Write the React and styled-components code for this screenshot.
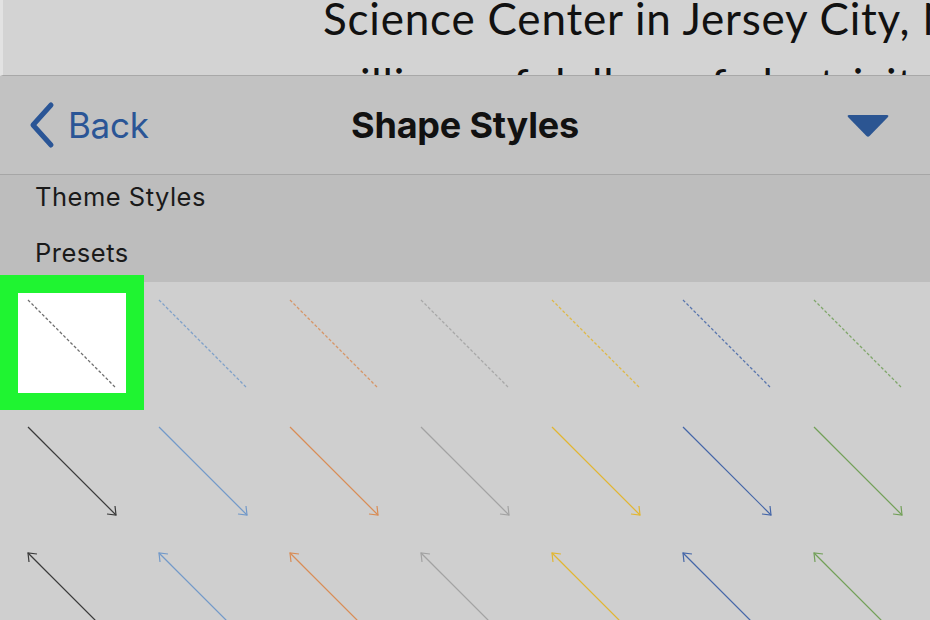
import React from 'react';
import styled, { createGlobalStyle } from 'styled-components';

const GlobalStyle = createGlobalStyle`
  html, body {
    margin: 0;
    padding: 0;
    background: #cfcfcf;
  }
  * {
    box-sizing: border-box;
  }
`;

const COLORS = ['#3a3a3a', '#7299c9', '#d98c55', '#a2a2a2', '#e2b631', '#4466a8', '#72a058'];

const CELL_W = 131;
const CELL_H = 126.5;

export default function App() {
  return (
    <>
      <GlobalStyle />
      <Page>
        <DocArea>
          <DocText>
            <DocLine>Science Center in Jersey City, New Jersey, which saves</DocLine>
            <DocLine>millions of dollars of electricity a year for the</DocLine>
          </DocText>
        </DocArea>

        <NavBar>
          <BackButton>
            <svg width="28" height="48" viewBox="0 0 28 48">
              <path d="M23 4 L5 24 L23 44" fill="none" stroke="#2a5596" strokeWidth="5" strokeLinecap="round" strokeLinejoin="round" />
            </svg>
            <BackLabel>Back</BackLabel>
          </BackButton>
          <Title>Shape Styles</Title>
          <Menu>
            <svg width="44" height="26" viewBox="0 0 44 26">
              <path d="M3 2 L41 2 Q43 2 42 4 L23.5 23 Q22 24.5 20.5 23 L2 4 Q1 2 3 2 Z" fill="#2b5592" />
            </svg>
          </Menu>
        </NavBar>

        <Options>
          <OptionRow>Theme Styles</OptionRow>
          <OptionRow>Presets</OptionRow>
        </Options>

        <Grid>
          {[0, 1, 2].map((row) =>
            COLORS.map((color, col) => (
              <Cell key={`${row}-${col}`}>
                {row === 0 && col === 0 && <Selected />}
                <LineIcon
                  kind={row}
                  color={row === 0 && col === 0 ? '#555' : color}
                />
              </Cell>
            ))
          )}
        </Grid>
      </Page>
    </>
  );
}

function LineIcon({ kind, color }) {
  const x1 = 28, y1 = 18, x2 = 116, y2 = 106;
  const head = 9;
  return (
    <Svg width={CELL_W} height={CELL_H + 20} viewBox={`0 0 ${CELL_W} ${CELL_H + 20}`}>
      {kind === 0 && (
        <line x1={x1} y1={y1} x2={x2} y2={y2} stroke={color} strokeWidth="1.3" strokeDasharray="3 2" opacity="0.85" />
      )}
      {kind === 1 && (
        <>
          <line x1={x1} y1={y1} x2={x2} y2={y2} stroke={color} strokeWidth="1.2" />
          <path d={`M${x2 - head} ${y2 - 1} L${x2} ${y2} L${x2 - 1} ${y2 - head}`} fill="none" stroke={color} strokeWidth="1.2" />
        </>
      )}
      {kind === 2 && (
        <>
          <line x1={x1} y1={y1} x2={x2} y2={y2} stroke={color} strokeWidth="1.2" />
          <path d={`M${x1 + head} ${y1 + 1} L${x1} ${y1} L${x1 + 1} ${y1 + head}`} fill="none" stroke={color} strokeWidth="1.2" />
        </>
      )}
    </Svg>
  );
}

const Page = styled.div`
  width: 930px;
  height: 620px;
  overflow: hidden;
  display: flex;
  flex-direction: column;
  background: #cfcfcf;
`;

const DocArea = styled.div`
  height: 76px;
  flex-shrink: 0;
  overflow: hidden;
  background: #d3d3d3;
  border-left: 3px solid #e2e2e2;
  border-bottom: 1px solid #a8a8a8;
  padding-left: 320px;
`;

const DocText = styled.div`
  margin-top: -15px;
`;

const DocLine = styled.div`
  font-family: Lato, "Liberation Sans", sans-serif;
  font-size: 44px;
  line-height: 66px;
  letter-spacing: 0.8px;
  color: #111;
  white-space: nowrap;
`;

const NavBar = styled.div`
  height: 99px;
  flex-shrink: 0;
  display: grid;
  grid-template-columns: 1fr auto 1fr;
  align-items: center;
  background: #c2c2c2;
  border-bottom: 1px solid #a6a6a6;
  font-family: Inter, "Liberation Sans", sans-serif;
`;

const BackButton = styled.div`
  display: flex;
  align-items: center;
  gap: 12px;
  padding-left: 28px;
  color: #2a5596;
`;

const BackLabel = styled.span`
  font-size: 35px;
  letter-spacing: -0.3px;
`;

const Title = styled.div`
  font-size: 36px;
  font-weight: 700;
  color: #111;
  letter-spacing: -0.2px;
`;

const Menu = styled.div`
  display: flex;
  justify-content: flex-end;
  padding-right: 40px;
  padding-top: 2px;
`;

const Options = styled.div`
  flex-shrink: 0;
  display: flex;
  flex-direction: column;
  gap: 12px;
  padding: 0 0 7px 35px;
  background: #bdbdbd;
  font-family: Inter, "Liberation Sans", sans-serif;
`;

const OptionRow = styled.div`
  height: 44px;
  line-height: 44px;
  font-size: 25.5px;
  color: #1a1a1a;
  letter-spacing: 0.5px;
`;

const Grid = styled.div`
  flex: 1;
  display: grid;
  grid-template-columns: repeat(7, ${CELL_W}px);
  grid-auto-rows: ${CELL_H}px;
  background: #cfcfcf;
`;

const Cell = styled.div`
  position: relative;
`;

const Selected = styled.div`
  position: absolute;
  left: 0;
  top: -7px;
  width: 144px;
  height: 135px;
  background: #fff;
  border: 18px solid #1ff431;
  border-bottom-width: 17px;
  z-index: 1;
`;

const Svg = styled.svg`
  position: relative;
  z-index: 2;
  display: block;
`;
